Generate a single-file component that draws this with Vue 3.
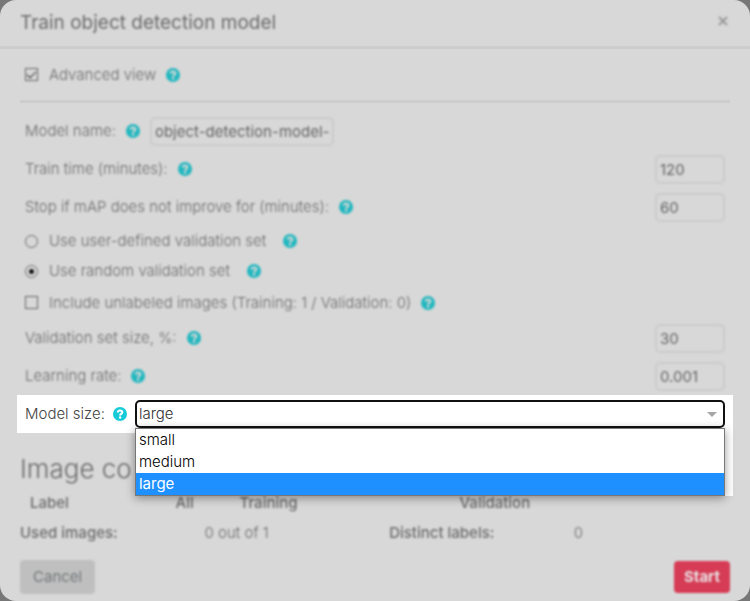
<script setup>
import { ref, h } from 'vue'

const HelpIcon = () =>
  h('svg', { class: 'help', viewBox: '0 0 14 14', role: 'img', 'aria-label': 'Help' }, [
    h('circle', { cx: 7, cy: 7, r: 7, fill: 'currentColor' }),
    h('path', {
      d: 'M4.7 5.5C4.8 4.1 5.8 3.5 7 3.5c1.3 0 2.3.8 2.3 1.9 0 1.5-2.2 1.5-2.2 3',
      fill: 'none',
      stroke: 'var(--mark)',
      'stroke-width': 2,
    }),
    h('circle', { cx: 7.1, cy: 10.5, r: 1.2, fill: 'var(--mark)' }),
  ])

const advanced = ref(true)
const modelName = ref('object-detection-model-')
const validation = ref('random')
const unlabeled = ref(false)
const size = ref('large')
const sizes = ['small', 'medium', 'large']

const timing = ref([
  { id: 'train-time', label: 'Train time (minutes):', value: '120' },
  { id: 'stop-after', label: 'Stop if mAP does not improve for (minutes):', value: '60' },
])
const tuning = ref([
  { id: 'validation-size', label: 'Validation set size, %:', value: '30' },
  { id: 'learning-rate', label: 'Learning rate:', value: '0.001' },
])
const radios = [
  { value: 'user', label: 'Use user-defined validation set' },
  { value: 'random', label: 'Use random validation set' },
]
</script>

<template>
  <main class="modal">
    <header class="header">
      <h1 class="soft">Train object detection model</h1>
      <button class="close soft" type="button" aria-label="Close">
        <svg viewBox="0 0 10 10"><path d="M1 1l8 8M9 1l-8 8" /></svg>
      </button>
    </header>

    <form class="body" @submit.prevent>
      <div class="advanced soft">
        <input id="advanced" v-model="advanced" type="checkbox" />
        <label for="advanced">Advanced view</label>
        <HelpIcon />
      </div>

      <section class="fields">
        <div class="row soft">
          <label for="model-name">Model name:</label>
          <HelpIcon />
          <input id="model-name" v-model="modelName" class="box name" type="text" />
        </div>
        <div v-for="f in timing" :key="f.id" class="row soft">
          <label :for="f.id">{{ f.label }}</label>
          <HelpIcon />
          <input :id="f.id" v-model="f.value" class="box number" type="text" />
        </div>
        <div v-for="r in radios" :key="r.value" class="row choice soft">
          <input :id="r.value" v-model="validation" type="radio" name="validation" :value="r.value" />
          <label :for="r.value">{{ r.label }}</label>
          <HelpIcon />
        </div>
        <div class="row choice tick soft">
          <input id="unlabeled" v-model="unlabeled" type="checkbox" />
          <label for="unlabeled">Include unlabeled images (Training: 1 / Validation: 0)</label>
          <HelpIcon />
        </div>
        <div v-for="f in tuning" :key="f.id" class="row soft">
          <label :for="f.id">{{ f.label }}</label>
          <HelpIcon />
          <input :id="f.id" v-model="f.value" class="box number" type="text" />
        </div>
        <div class="row spotlight">
          <label for="model-size">Model size:</label>
          <HelpIcon />
          <div class="picker">
            <select id="model-size" v-model="size">
              <option v-for="s in sizes" :key="s">{{ s }}</option>
            </select>
            <svg class="arrow" viewBox="0 0 10 5"><path d="M0 0h10L5 5z" /></svg>
            <ul class="menu" role="listbox" aria-label="Model size">
              <li
                v-for="s in sizes"
                :key="s"
                role="option"
                :aria-selected="s === size"
                :class="{ active: s === size }"
                @click="size = s"
              >{{ s }}</li>
            </ul>
          </div>
        </div>
      </section>

      <section class="summary soft">
        <h2>Image co</h2>
        <table>
          <thead>
            <tr>
              <th class="c-label">Label</th>
              <th class="c-all">All</th>
              <th class="c-train">Training</th>
              <th>Validation</th>
            </tr>
          </thead>
        </table>
        <dl>
          <dt>Used images:</dt>
          <dd>0 out of 1</dd>
          <dt>Distinct labels:</dt>
          <dd>0</dd>
        </dl>
      </section>

      <footer class="footer soft">
        <button class="btn cancel" type="button">Cancel</button>
        <button class="btn start" type="submit">Start</button>
      </footer>
    </form>
  </main>
</template>

<style>
body {
  background: #777;
}
</style>

<style scoped>
.modal {
  --mark: #d8d8d8;
  --teal: #22b7bf;
  background: #d8d8d8;
  border-radius: 16px;
  color: #6c6c6c;
  font: 300 15px/22px Inter, "Open Sans", sans-serif;
  padding-bottom: 7px;
}
.soft {
  filter: blur(1px);
}
h1,
h2,
dl,
dd,
ul {
  margin: 0;
  padding: 0;
  font-weight: 300;
}
.header {
  display: flex;
  align-items: center;
  justify-content: space-between;
  padding: 8px 22px 8px 20px;
  border-bottom: 3px solid #cdcdcd;
}
h1 {
  font-size: 19px;
  font-weight: 400;
  line-height: 30px;
}
.close {
  display: flex;
  padding: 0;
  margin-bottom: 5px;
  border: 0;
  background: none;
}
.close svg {
  width: 10px;
  height: 10px;
  stroke: #999;
  stroke-width: 2;
}
.advanced {
  display: flex;
  align-items: center;
  height: 51px;
  padding: 0 25px;
}
.fields {
  position: relative;
  z-index: 1;
  padding-top: 9px;
}
.fields::before {
  content: "";
  display: block;
  height: 3px;
  margin: -9px 20px 9px;
  background: #cdcdcd;
}
.row {
  display: flex;
  align-items: center;
  height: 38px;
  padding: 0 25px;
}
.choice {
  height: 30px;
}
.tick {
  height: 33px;
}
:deep(.help) {
  flex: none;
  width: 14px;
  height: 14px;
  margin: 0 10px;
  color: var(--teal);
}
.choice :deep(.help) {
  margin-left: 17px;
}
.tick :deep(.help) {
  margin-left: 10px;
}
input[type="checkbox"],
input[type="radio"] {
  appearance: none;
  flex: none;
  display: grid;
  place-items: center;
  width: 13px;
  height: 13px;
  margin: 0 11px 0 0;
  border: 1px solid #666;
}
input[type="radio"] {
  border-radius: 50%;
}
input[type="radio"]:checked::before {
  content: "";
  width: 5px;
  height: 5px;
  border-radius: 50%;
  background: #111;
}
input[type="checkbox"]:checked::before {
  content: "";
  width: 9px;
  height: 5px;
  margin-bottom: 3px;
  border: solid #333;
  border-width: 0 0 1px 1px;
  box-sizing: border-box;
  transform: rotate(-45deg);
}
.box {
  box-sizing: border-box;
  height: 29px;
  padding: 0 3px;
  border: 2px solid #cbcbcb;
  border-radius: 5px;
  background: transparent;
  color: #666;
  font: inherit;
  font-weight: 400;
}
.name {
  width: 184px;
}
.number {
  width: 70px;
  margin-left: auto;
}
.spotlight {
  --mark: #fff;
  --teal: #17cad8;
  position: relative;
  margin: 0 17px;
  padding: 0 8px;
  background: #fff;
  color: #444;
}
.spotlight :deep(.help) {
  margin: 0 8px;
}
.spotlight::after {
  content: "";
  position: absolute;
  top: 100%;
  right: 0;
  width: 9px;
  height: 63px;
  background: #fff;
}
.picker {
  position: relative;
  z-index: 1;
  flex: 1;
}
select {
  appearance: none;
  display: block;
  width: 100%;
  height: 28px;
  padding: 0 2px;
  border: 2px solid #111;
  border-radius: 5px;
  outline: 0;
  background: #fff;
  color: #333;
  font: inherit;
}
.arrow {
  position: absolute;
  top: 12px;
  right: 8px;
  width: 10px;
  height: 5px;
  fill: #a6a6a6;
}
.menu {
  position: absolute;
  top: 100%;
  left: 0;
  right: 0;
  border: 1px solid #777;
  background: #fff;
  box-shadow: 0 2px 9px rgba(0, 0, 0, 0.4);
  color: #000;
  list-style: none;
}
.menu li {
  padding: 0 3px;
}
.menu .active {
  background: #1e90ff;
  color: #fff;
  font-weight: 400;
}
.summary {
  padding: 17px 20px 12px;
}
h2 {
  font-size: 26px;
  line-height: 38px;
}
table {
  width: 100%;
  border-collapse: collapse;
  table-layout: fixed;
}
th {
  height: 30px;
  padding: 0;
  text-align: left;
  font-weight: 500;
}
.c-label {
  width: 20.5%;
  padding-left: 10px;
}
.c-all {
  width: 9%;
}
.c-train {
  width: 31%;
}
dl {
  display: grid;
  grid-template-columns: 26% 26% 26% 1fr;
  line-height: 30px;
}
dt {
  font-weight: 500;
}
.footer {
  display: flex;
  align-items: center;
  justify-content: space-between;
  padding: 0 20px;
}
.btn {
  padding: 6px 13px;
  border: 0;
  border-radius: 4px;
  font: inherit;
  font-weight: 400;
}
.cancel {
  background: #bfbfbf;
  color: #74777a;
}
.start {
  padding: 5px 10px;
  background: #d63c55;
  color: #e9e1e3;
  font-weight: 700;
}
</style>
